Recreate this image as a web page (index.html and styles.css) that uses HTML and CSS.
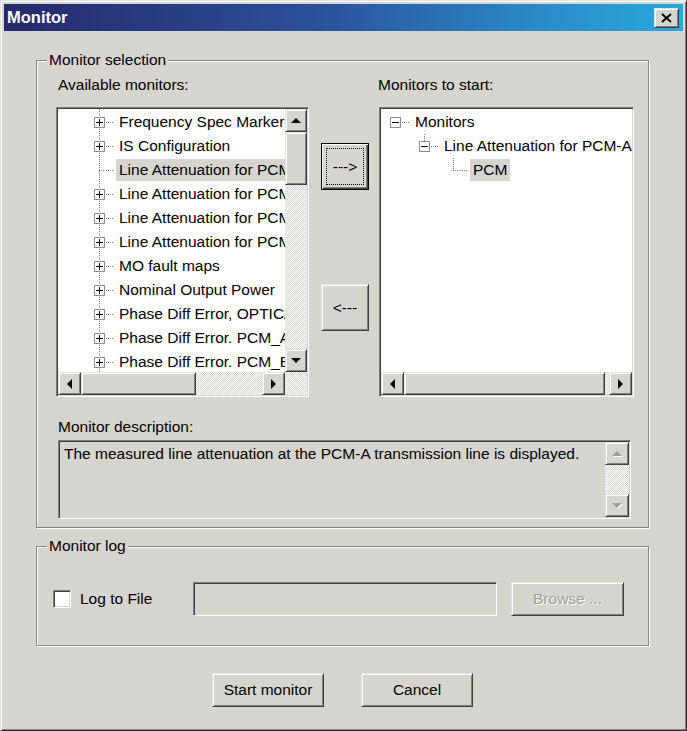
FILE: index.html
```html
<!DOCTYPE html>
<html lang="en">
<head>
    <meta charset="UTF-8">
    <title>Monitor</title>
    <link rel="stylesheet" href="styles.css">
</head>
<body>
    <div class="window">
        <div class="titlebar">
            <span class="title">Monitor</span>
            <span class="close raised">
                <svg width="11" height="10" viewBox="0 0 11 10"><path d="M1 1 L10 9 M10 1 L1 9" stroke="#000" stroke-width="2"/></svg>
            </span>
        </div>

        <div class="content">
            <div class="group sel-group">
                <span class="group-title">Monitor selection</span>

                <div class="pickers">
                    <div class="picker">
                        <div class="caption left-caption">Available monitors:</div>
                        <div class="tree sunken left-tree">
                            <div class="tree-list guide">
                                <div class="node lvl2"><span class="exp plus"></span><span class="dash"></span><span class="label">Frequency Spec Marker</span></div>
                                <div class="node lvl2"><span class="exp plus"></span><span class="dash"></span><span class="label">IS Configuration</span></div>
                                <div class="node lvl2"><span class="exp leaf"></span><span class="dash"></span><span class="label sel">Line Attenuation for PCM-A</span></div>
                                <div class="node lvl2"><span class="exp plus"></span><span class="dash"></span><span class="label">Line Attenuation for PCM-B</span></div>
                                <div class="node lvl2"><span class="exp plus"></span><span class="dash"></span><span class="label">Line Attenuation for PCM-C</span></div>
                                <div class="node lvl2"><span class="exp plus"></span><span class="dash"></span><span class="label">Line Attenuation for PCM-D</span></div>
                                <div class="node lvl2"><span class="exp plus"></span><span class="dash"></span><span class="label">MO fault maps</span></div>
                                <div class="node lvl2"><span class="exp plus"></span><span class="dash"></span><span class="label">Nominal Output Power</span></div>
                                <div class="node lvl2"><span class="exp plus"></span><span class="dash"></span><span class="label">Phase Diff Error, OPTICAL</span></div>
                                <div class="node lvl2"><span class="exp plus"></span><span class="dash"></span><span class="label">Phase Diff Error. PCM_A</span></div>
                                <div class="node lvl2"><span class="exp plus"></span><span class="dash"></span><span class="label">Phase Diff Error. PCM_B</span></div>
                            </div>
                            <div class="vscroll">
                                <span class="sb-btn raised"><i class="arr up"></i></span>
                                <span class="sb-thumb raised"></span>
                                <span class="sb-track"></span>
                                <span class="sb-btn raised"><i class="arr down"></i></span>
                            </div>
                            <div class="hscroll">
                                <span class="sb-btn raised"><i class="arr left"></i></span>
                                <span class="sb-thumb raised thumb-short"></span>
                                <span class="sb-track"></span>
                                <span class="sb-btn raised"><i class="arr right"></i></span>
                            </div>
                            <div class="sb-track"></div>
                        </div>
                    </div>

                    <div class="movers">
                        <button class="btn mover default"><span class="focus">---&gt;</span></button>
                        <button class="btn mover raised">&lt;---</button>
                    </div>

                    <div class="picker">
                        <div class="caption right-caption">Monitors to start:</div>
                        <div class="tree sunken right-tree">
                            <div class="tree-list">
                                <div class="node lvl1"><span class="exp minus"></span><span class="dash"></span><span class="label">Monitors</span></div>
                                <div class="node lvl2 stem-short"><span class="exp minus"></span><span class="dash"></span><span class="label">Line Attenuation for PCM-A</span></div>
                                <div class="node lvl3 stem-half"><span class="exp leaf"></span><span class="dash"></span><span class="label sel">PCM</span></div>
                            </div>
                            <div class="hscroll">
                                <span class="sb-btn raised"><i class="arr left"></i></span>
                                <span class="sb-thumb raised thumb-long"></span>
                                <span class="sb-track"></span>
                                <span class="sb-btn raised"><i class="arr right"></i></span>
                            </div>
                        </div>
                    </div>
                </div>

                <div class="caption desc-caption">Monitor description:</div>
                <div class="desc sunken">
                    <div class="desc-text">The measured line attenuation at the PCM-A transmission line is displayed.</div>
                    <div class="vscroll">
                        <span class="sb-btn raised"><i class="arr up off"></i></span>
                        <span class="sb-track"></span>
                        <span class="sb-btn raised"><i class="arr down off"></i></span>
                    </div>
                </div>
            </div>

            <div class="group log-group">
                <span class="group-title">Monitor log</span>
                <div class="log-row">
                    <label class="check">
                        <span class="checkbox sunken"></span>
                        <span>Log to File</span>
                    </label>
                    <div class="path sunken"></div>
                    <button class="btn browse raised" disabled>Browse ...</button>
                </div>
            </div>

            <div class="actions">
                <button class="btn action raised">Start monitor</button>
                <button class="btn action raised">Cancel</button>
            </div>
        </div>
    </div>
</body>
</html>
```

FILE: styles.css
```css
* {
    box-sizing: border-box;
}

body {
    margin: 0;
    font-family: "Liberation Sans", Arial, sans-serif;
    font-size: 15.5px;
    color: #000;
    background: #d6d5cf;
}

.window {
    width: 687px;
    height: 731px;
    background: #d6d5cf;
    border: 1px solid;
    border-color: #e4e3dd #303030 #303030 #e4e3dd;
    box-shadow: inset 1px 1px #fff, inset -1px -1px #808080;
    padding: 3px;
}

/* 3d edges */
.raised {
    border: 1px solid;
    border-color: #e4e3dd #404040 #404040 #e4e3dd;
    box-shadow: inset 1px 1px #fff, inset -1px -1px #808080;
    background: #d6d5cf;
}

.sunken {
    border: 1px solid;
    border-color: #808080 #fff #fff #808080;
    box-shadow: inset 1px 1px #404040, inset -1px -1px #d6d5cf;
    padding: 1px;
}

.titlebar {
    height: 27px;
    display: flex;
    align-items: center;
    justify-content: space-between;
    padding: 0 4px 0 3px;
    background: linear-gradient(to right, #26286a, #2a4f98 45%, #2a8ccc 80%, #2aa8de);
}

.title {
    color: #fff;
    font-weight: bold;
    font-size: 16.5px;
}

.close {
    width: 25px;
    height: 20px;
    display: flex;
    align-items: center;
    justify-content: center;
}

.content {
    padding: 0 34px 0 32px;
}

/* group boxes */
.group {
    position: relative;
    width: 613px;
    border: 1px solid #868680;
    box-shadow: 1px 1px 0 #fff, inset 1px 1px 0 #fff;
}

.group-title {
    position: absolute;
    top: -10px;
    left: 10px;
    padding: 0 2px;
    line-height: 18px;
    background: #d6d5cf;
}

.sel-group {
    margin-top: 29px;
    padding: 15px 14px 8px 19px;
}

.caption {
    line-height: 18px;
}

.left-caption {
    margin-left: 2px;
    margin-bottom: 13px;
}

.right-caption {
    margin-left: -1px;
    margin-bottom: 13px;
}

.pickers {
    display: flex;
}

/* tree views */
.tree {
    height: 290px;
    background: #fff;
    display: grid;
    grid-template-rows: 1fr 23px;
}

.left-tree {
    width: 253px;
    grid-template-columns: 1fr 22px;
}

.right-tree {
    width: 255px;
    grid-template-columns: 1fr;
}

.tree-list {
    overflow: hidden;
    white-space: nowrap;
    padding-top: 1px;
}

.guide {
    background: repeating-linear-gradient(to bottom, #808080 0 1px, transparent 1px 2px) 41px 0 / 1px 100% no-repeat;
}

.node {
    display: flex;
    align-items: center;
    height: 24px;
}

.lvl1 { padding-left: 9px; }
.left-tree .lvl2 { padding-left: 36px; }
.right-tree .lvl2 { padding-left: 38px; }
.lvl3 { padding-left: 67px; }

.stem-short {
    background: repeating-linear-gradient(to bottom, #808080 0 1px, transparent 1px 2px) 43px 0 / 1px 7px no-repeat;
}

.stem-half {
    background: repeating-linear-gradient(to bottom, #808080 0 1px, transparent 1px 2px) 72px 0 / 1px 12px no-repeat;
}

.exp {
    flex: none;
    width: 11px;
    height: 11px;
}

.plus,
.minus {
    border: 1px solid #8c8c8c;
    background: linear-gradient(#000, #000) center / 7px 1px no-repeat, #fff;
}

.plus {
    background: linear-gradient(#000, #000) center / 7px 1px no-repeat,
                linear-gradient(#000, #000) center / 1px 7px no-repeat, #fff;
}

.leaf {
    background: repeating-linear-gradient(to right, #808080 0 1px, transparent 1px 2px) right center / 6px 1px no-repeat;
}

.dash {
    flex: none;
    width: 7px;
    height: 1px;
    margin: 0 3px 0 1px;
    background: repeating-linear-gradient(to right, #808080 0 1px, transparent 1px 2px);
}

.label {
    padding: 0 3px;
    line-height: 22px;
}

.label.sel {
    background: #d6d5cf;
}

/* scrollbars */
.vscroll {
    display: flex;
    flex-direction: column;
}

.hscroll {
    display: flex;
}

.sb-btn {
    flex: none;
    width: 23px;
    height: 23px;
    display: flex;
    align-items: center;
    justify-content: center;
}

.vscroll .sb-btn {
    width: auto;
}

.sb-track {
    flex: 1;
    background: repeating-conic-gradient(#fff 0 25%, #d6d5cf 0 50%) 0 0 / 2px 2px;
}

.vscroll .sb-thumb {
    height: 53px;
}

.thumb-short { width: 115px; }
.thumb-long { width: 201px; }

.arr {
    width: 0;
    height: 0;
    border: 5px solid transparent;
}

.arr.up { border-bottom-color: #000; border-top-width: 0; }
.arr.down { border-top-color: #000; border-bottom-width: 0; }
.arr.left { border-right-color: #000; border-left-width: 0; }
.arr.right { border-left-color: #000; border-right-width: 0; }

.arr.up.off { border-bottom-color: #a0a09a; filter: drop-shadow(1px 1px 0 #fff); }
.arr.down.off { border-top-color: #a0a09a; filter: drop-shadow(1px 1px 0 #fff); }

/* buttons */
.btn {
    font: inherit;
    color: #000;
    padding: 0;
    display: flex;
    align-items: center;
    justify-content: center;
}

.movers {
    display: flex;
    flex-direction: column;
    gap: 94px;
    margin: 67px 10px 0 12px;
}

.mover {
    width: 48px;
    height: 47px;
}

.default {
    border: 1px solid #000;
    background: #d6d5cf;
    box-shadow: inset 1px 1px #fff, inset -1px -1px #404040, inset -2px -2px #808080;
    align-items: stretch;
}

.focus {
    flex: 1;
    margin: 4px;
    border: 1px dotted #000;
    display: flex;
    align-items: center;
    justify-content: center;
}

/* description */
.desc-caption {
    margin: 21px 0 0 2px;
}

.desc {
    width: 573px;
    height: 79px;
    margin: 4px 0 0 2px;
    display: flex;
}

.desc-text {
    flex: 1;
    padding: 3px 4px;
    line-height: 18px;
}

.desc .vscroll {
    width: 24px;
}

/* monitor log */
.log-group {
    margin-top: 18px;
    padding: 35px 0 29px 16px;
}

.log-row {
    display: flex;
    align-items: center;
    height: 34px;
}

.check {
    width: 140px;
    display: flex;
    align-items: center;
    gap: 9px;
}

.checkbox {
    width: 18px;
    height: 18px;
    background: #fff;
}

.path {
    width: 304px;
    height: 34px;
    background: #d6d5cf;
}

.browse {
    width: 113px;
    height: 34px;
    margin-left: 14px;
    color: #a0a09a;
    text-shadow: 1px 1px 0 #fff;
}

.actions {
    display: flex;
    justify-content: center;
    gap: 37px;
    margin-top: 27px;
}

.action {
    width: 112px;
    height: 34px;
}
```
